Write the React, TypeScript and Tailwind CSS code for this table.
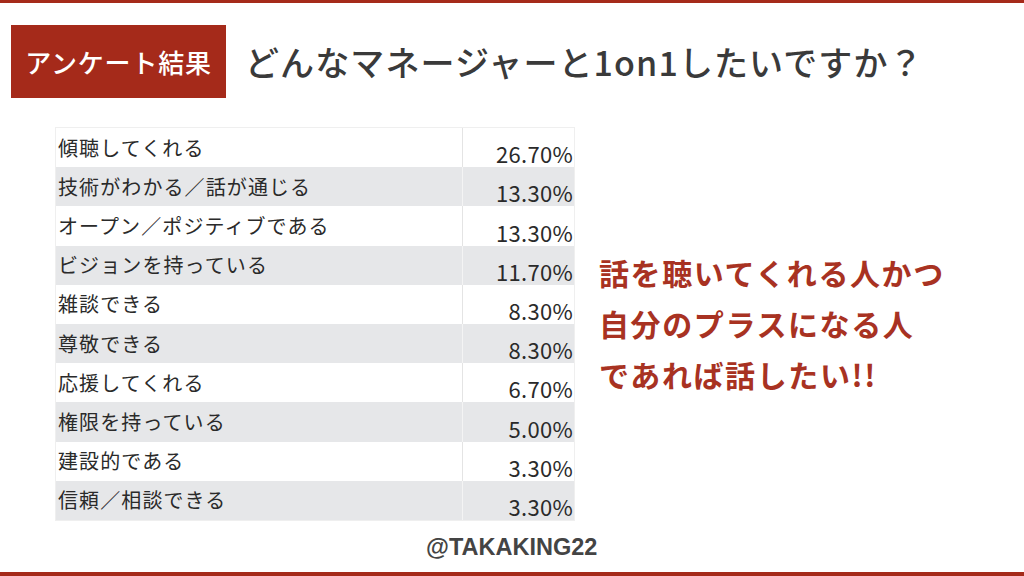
import React from "react";

const rows: [string, string][] = [
  ["傾聴してくれる", "26.70%"],
  ["技術がわかる／話が通じる", "13.30%"],
  ["オープン／ポジティブである", "13.30%"],
  ["ビジョンを持っている", "11.70%"],
  ["雑談できる", "8.30%"],
  ["尊敬できる", "8.30%"],
  ["応援してくれる", "6.70%"],
  ["権限を持っている", "5.00%"],
  ["建設的である", "3.30%"],
  ["信頼／相談できる", "3.30%"],
];

const jp = { fontFamily: '"Noto Sans CJK JP", "Noto Sans", sans-serif' };

export default function App() {
  return (
    <div className="w-[1024px] h-[576px] bg-white flex flex-col overflow-hidden" style={jp}>
      <div className="h-[3px] bg-[#a52a1a] shrink-0" />
      <div className="flex items-center mt-[22px] ml-[11px]">
        <div className="w-[215px] h-[73px] bg-[#a52a1a] flex items-center justify-center text-white text-[26px] font-medium tracking-[0.8px]">
          アンケート結果
        </div>
        <div className="ml-[19px] text-[34px] font-medium text-[#3a3a3a] tracking-[1.1px]">
          どんなマネージャーと1on1したいですか？
        </div>
      </div>
      <div className="flex mt-[29px]">
        <div className="ml-[55px] w-[520px] border border-[#efefef] flex flex-col">
          {rows.map(([label, pct], i) => {
            const gray = i % 2 === 1;
            return (
              <div
                key={i}
                className={`flex h-[39.2px] ${gray ? "bg-[#e6e7e9]" : "bg-white"}`}
              >
                <div className="w-[406px] flex items-center pl-[2px] text-[20px] text-[#2a2a2a] tracking-[1.1px]">
                  {label}
                </div>
                <div
                  className={`flex-1 flex items-end justify-end pr-[1px] pb-[1px] text-[22px] text-[#2a2a2a] tracking-[0.3px] border-l ${gray ? "border-[#f4f4f4]" : "border-[#e4e4e4]"}`}
                >
                  <span className="leading-[26px]">{pct}</span>
                </div>
              </div>
            );
          })}
        </div>
        <div className="ml-[24px] mt-[120px] text-[30px] leading-[51px] font-bold text-[#a83222] tracking-[1.6px]">
          <div>話を聴いてくれる人かつ</div>
          <div>自分のプラスになる人</div>
          <div>であれば話したい!!</div>
        </div>
      </div>
      <div
        className="ml-[426px] mt-[12px] text-[23.5px] leading-[28px] font-bold text-[#444444]"
        style={{ fontFamily: '"Liberation Sans", Arial, sans-serif' }}
      >
        @TAKAKING22
      </div>
      <div className="mt-auto h-[4px] bg-[#a52a1a] shrink-0" />
    </div>
  );
}
